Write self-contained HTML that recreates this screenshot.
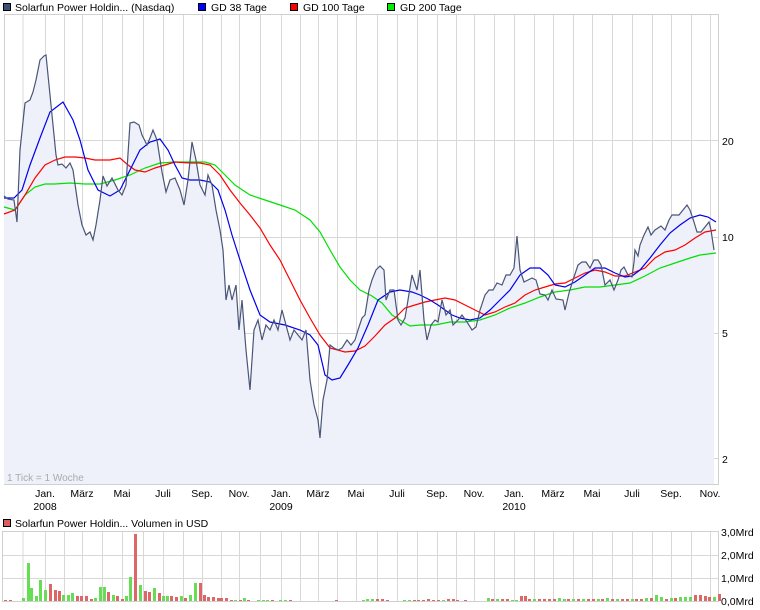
<!DOCTYPE html>
<html><head><meta charset="utf-8"><style>
html,body{margin:0;padding:0;background:#fff;width:760px;height:610px;overflow:hidden}
svg{display:block;font-family:"Liberation Sans",Arial,sans-serif}
</style></head><body>
<svg id="s" width="760" height="610" viewBox="0 0 760 610" xmlns="http://www.w3.org/2000/svg">
<g id="grid" stroke="#d8d8d8" stroke-width="1" shape-rendering="crispEdges"></g>
<rect x="4.5" y="14.5" width="714" height="470" fill="none" stroke="#d0d0d0" shape-rendering="crispEdges"/>
<rect x="2.5" y="531.5" width="716" height="70" fill="none" stroke="#d0d0d0" shape-rendering="crispEdges"/>
<path id="area" fill="#eef1f9" stroke="none"/>
<polyline id="g200" fill="none" stroke="#00e000" stroke-width="1.2"/>
<polyline id="g100" fill="none" stroke="#ff0000" stroke-width="1.2"/>
<polyline id="g38" fill="none" stroke="#0000ee" stroke-width="1.2"/>
<polyline id="price" fill="none" stroke="#4a5578" stroke-width="1.2"/>
<g id="vol" shape-rendering="crispEdges"></g>
<g font-size="10.5" fill="#000">
<rect x="3.5" y="3.5" width="7" height="7" fill="#3c5078" stroke="#000"/>
<text x="15" y="11">Solarfun Power Holdin... (Nasdaq)</text>
<rect x="198.5" y="3.5" width="7" height="7" fill="#0000ff" stroke="#000"/>
<text x="211" y="11">GD 38 Tage</text>
<rect x="290.5" y="3.5" width="7" height="7" fill="#ff0000" stroke="#000"/>
<text x="303" y="11">GD 100 Tage</text>
<rect x="387.5" y="3.5" width="7" height="7" fill="#00ee00" stroke="#000"/>
<text x="400" y="11">GD 200 Tage</text>
<text x="722" y="145">20</text>
<text x="722" y="241">10</text>
<text x="722" y="337">5</text>
<text x="722" y="463">2</text>
<text x="7" y="481" fill="#aaa" font-size="10">1 Tick = 1 Woche</text>
<g text-anchor="middle">
<text x="45" y="497">Jan.</text><text x="45" y="510">2008</text>
<text x="82" y="497">März</text><text x="122" y="497">Mai</text><text x="163" y="497">Juli</text>
<text x="202" y="497">Sep.</text><text x="239" y="497">Nov.</text>
<text x="281" y="497">Jan.</text><text x="281" y="510">2009</text>
<text x="318" y="497">März</text><text x="356" y="497">Mai</text><text x="397" y="497">Juli</text>
<text x="437" y="497">Sep.</text><text x="474" y="497">Nov.</text>
<text x="514" y="497">Jan.</text><text x="514" y="510">2010</text>
<text x="553" y="497">März</text><text x="592" y="497">Mai</text><text x="632" y="497">Juli</text>
<text x="671" y="497">Sep.</text><text x="710" y="497">Nov.</text>
</g>
<rect x="3.5" y="519.5" width="7" height="7" fill="#d86060" stroke="#000"/>
<text x="15" y="527">Solarfun Power Holdin... Volumen in USD</text>
<text x="721" y="536">3,0Mrd</text>
<text x="721" y="559">2,0Mrd</text>
<text x="721" y="582">1,0Mrd</text>
<text x="721" y="605">0,0Mrd</text>
</g>
</svg>
<script>
var NS="http://www.w3.org/2000/svg";
var g=document.getElementById('grid');
function L(x1,y1,x2,y2){var l=document.createElementNS(NS,'line');l.setAttribute('x1',x1);l.setAttribute('y1',y1);l.setAttribute('x2',x2);l.setAttribute('y2',y2);g.appendChild(l);}
var months=[45,82,122,163,202,239,281,318,356,397,437,474,514,553,592,632,671,710];
var vx=[22.5];
for(var i=0;i<months.length;i++){vx.push(months[i]);if(i<months.length-1)vx.push(Math.round((months[i]+months[i+1])/2));}
vx.forEach(function(x){L(x+.5,15,x+.5,484);L(x+.5,532,x+.5,601);});
[140,237,333,458].forEach(function(y){L(5,y+.5,718,y+.5);});
[555,578].forEach(function(y){L(3,y+.5,718,y+.5);});
var P="4,196 8,199 14,200 17,222 20,150 25,103 30,100 33,92 36,80 40,60 44,56 46,55 48,75 52,115 56,155 58,165 62,164 66,168 70,163 73,170 78,205 82,225 86,235 90,232 93,240 96,225 100,200 103,176 107,186 112,178 118,190 122,195 126,185 130,123 134,122 139,125 142,135 147,145 150,138 153,130 157,140 162,172 166,192 170,180 175,178 180,190 184,205 188,180 192,142 196,160 200,185 205,195 208,175 212,185 216,210 220,230 223,250 226,300 229,285 232,300 236,285 239,330 242,300 246,350 250,390 254,330 258,320 262,340 266,325 270,330 274,320 278,330 282,310 286,325 290,340 294,330 298,335 302,340 306,330 310,380 314,405 318,420 320,438 323,400 327,380 330,345 334,348 338,350 342,348 347,340 351,345 355,340 358,330 362,318 365,315 369,290 372,280 376,270 380,266 384,270 386,300 390,290 394,290 398,320 401,325 405,318 408,300 412,275 417,290 420,270 424,320 427,340 431,325 435,320 438,322 442,300 446,315 450,310 453,325 458,320 462,315 467,322 472,330 476,327 480,310 485,295 489,290 493,290 497,283 502,285 506,275 510,275 514,268 517,236 520,270 524,282 528,280 532,278 536,280 540,294 545,295 548,300 552,290 556,299 563,300 565,310 569,293 573,280 578,265 582,262 586,262 590,268 594,260 598,260 601,265 605,285 610,280 614,290 618,280 621,270 624,267 628,275 632,277 634,262 635,250 638,256 640,245 644,235 648,227 651,235 655,230 658,228 661,226 665,230 669,220 672,215 676,215 679,215 683,210 687,205 690,210 694,222 697,232 701,232 705,227 709,222 711,230 714,250";
document.getElementById('price').setAttribute('points',P);
document.getElementById('area').setAttribute('d','M4,484 L'+P.replace(/ /g,' L')+' L714,484 Z');
document.getElementById('g38').setAttribute('points',"4,198 14,198 22,190 30,165 40,138 50,112 63,102 73,120 80,140 88,170 98,190 110,196 120,190 130,170 140,150 150,142 160,139 168,150 175,165 182,178 190,180 200,180 210,182 218,190 225,210 232,235 240,260 250,290 260,315 270,322 285,325 300,330 310,335 318,345 325,375 332,380 340,378 348,365 358,348 368,325 378,300 390,292 400,290 412,292 420,295 430,300 438,305 445,310 452,315 460,318 470,320 480,318 490,310 500,300 510,290 520,275 530,268 540,268 548,275 555,285 565,287 575,282 585,275 595,268 605,268 615,273 625,277 632,276 640,270 650,258 660,245 670,233 680,225 690,218 700,215 708,217 716,222");
document.getElementById('g100').setAttribute('points',"4,214 15,210 25,195 35,178 45,165 55,160 65,157 75,157 85,158 95,160 110,160 120,158 128,165 135,170 145,172 155,168 165,165 175,162 190,163 200,163 210,165 220,175 230,190 240,203 250,215 260,228 270,245 280,260 290,280 300,300 310,318 320,335 330,348 345,352 355,351 365,346 375,336 385,325 395,318 405,308 415,305 425,302 435,300 445,298 455,300 465,305 475,310 485,315 495,312 505,307 515,303 525,295 535,290 545,287 555,284 565,283 575,278 585,273 595,270 605,272 615,276 625,276 635,272 645,268 655,258 665,252 675,250 685,245 695,238 705,232 716,230");
document.getElementById('g200').setAttribute('points',"4,207 15,210 25,195 35,187 45,184 55,184 70,183 85,184 100,184 115,180 130,175 145,168 160,163 175,162 190,162 205,162 215,165 225,175 235,185 250,195 265,200 280,205 295,210 310,220 320,232 330,250 340,267 350,280 360,290 372,296 382,303 392,315 400,320 410,326 420,325 435,325 450,322 465,322 480,320 495,315 510,308 525,303 540,297 555,292 570,290 585,287 600,287 615,285 630,283 645,276 660,268 675,263 690,258 700,255 716,253");
var V=[[10,1,'r'],[20,1,'r'],[47,3,'g'],[57,38,'g'],[64,13,'g'],[74,5,'g'],[83,21,'g'],[93,11,'g'],[102,17,'r'],[112,11,'r'],[121,10,'r'],[130,6,'g'],[140,6,'g'],[148,8,'g'],[158,5,'r'],[167,5,'r'],[176,5,'r'],[186,2,'r'],[195,3,'g'],[205,14,'g'],[213,14,'g'],[222,9,'r'],[232,6,'g'],[241,5,'r'],[250,2,'r'],[259,5,'g'],[268,24,'g'],[278,67,'r'],[287,16,'g'],[297,10,'r'],[306,9,'r'],[316,13,'g'],[326,8,'r'],[335,5,'g'],[344,5,'g'],[352,5,'r'],[362,4,'r'],[372,5,'g'],[380,3,'r'],[390,6,'g'],[400,18,'g'],[410,18,'r'],[419,6,'r'],[428,4,'r'],[438,4,'r'],[447,3,'r'],[455,3,'r'],[464,3,'r'],[474,1,'r'],[483,1,'g'],[493,1,'r'],[501,3,'g'],[510,1,'r'],[530,1,'g'],[540,1,'g'],[549,1,'g'],[558,1,'r'],[576,1,'g'],[586,1,'g'],[596,1,'r'],[690,1,'r'],[745,1,'g'],[755,2,'g'],[765,2,'g'],[775,2,'r'],[785,2,'r'],[795,1,'r'],[830,1,'g'],[840,1,'g'],[850,1,'r'],[860,1,'r'],[870,1,'r'],[880,2,'r'],[890,1,'r'],[900,1,'r'],[910,1,'g'],[920,2,'r'],[930,2,'r'],[940,1,'r'],[955,1,'r'],[1002,3,'g'],[1012,2,'r'],[1022,2,'g'],[1032,2,'r'],[1042,2,'r'],[1052,1,'g'],[1060,1,'g'],[1070,5,'r'],[1078,5,'r'],[1088,2,'r'],[1098,2,'g'],[1108,2,'r'],[1118,2,'r'],[1128,2,'r'],[1138,2,'r'],[1148,3,'g'],[1158,2,'g'],[1168,2,'r'],[1178,2,'g'],[1188,2,'r'],[1198,2,'g'],[1208,2,'r'],[1218,2,'r'],[1228,2,'g'],[1238,2,'r'],[1248,3,'g'],[1258,2,'r'],[1268,2,'g'],[1278,2,'r'],[1288,2,'r'],[1298,2,'g'],[1308,2,'r'],[1318,2,'r'],[1328,3,'g'],[1338,3,'r'],[1348,6,'g'],[1358,4,'g'],[1368,2,'r'],[1378,3,'g'],[1388,3,'r'],[1398,4,'g'],[1408,4,'g'],[1418,4,'g'],[1428,6,'r'],[1438,6,'r'],[1448,5,'r'],[1458,4,'r'],[1468,4,'g'],[1478,7,'r']];
var vg=document.getElementById('vol');
V.forEach(function(b){var r=document.createElementNS(NS,'rect');var x=Math.round(b[0]/2.055);r.setAttribute('x',x-1);r.setAttribute('y',601-b[1]);r.setAttribute('width',3);r.setAttribute('height',b[1]);r.setAttribute('fill',b[2]=='g'?'#66dd55':'#dd6666');vg.appendChild(r);});
</script>
</body></html>
